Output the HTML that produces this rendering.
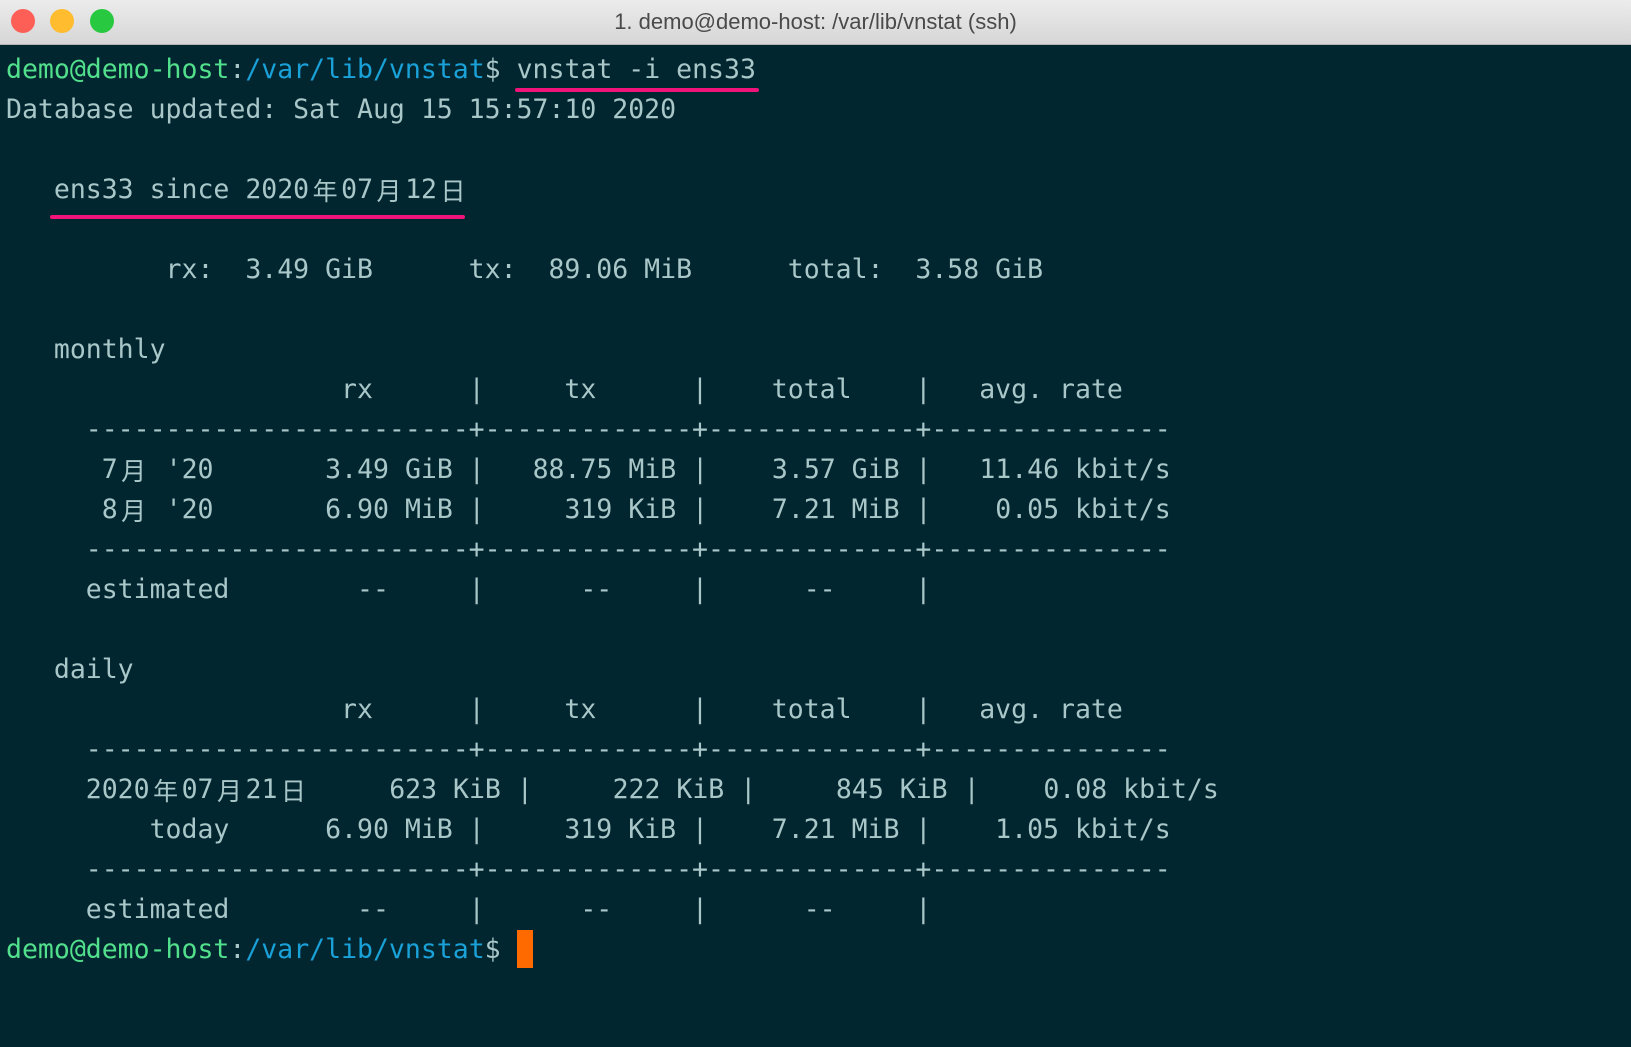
<!DOCTYPE html>
<html><head><meta charset="utf-8"><style>
html,body{margin:0;padding:0;width:1631px;height:1047px;overflow:hidden;background:#01262f}
.bar{position:absolute;left:0;top:0;width:1631px;height:44px;background:linear-gradient(#ececec,#d6d6d6);border-bottom:1px solid #b5b5b5}
.dot{position:absolute;top:9px;width:24px;height:24px;border-radius:50%}
.title{position:absolute;left:0;right:0;top:9px;text-align:center;font:22px "Liberation Sans",sans-serif;color:#4a4a4a}
pre{position:absolute;left:6px;top:50px;margin:0;font:26.5px/40px "DejaVu Sans Mono","Noto Sans CJK SC",monospace;color:#a9c7c8;white-space:pre}
.w{display:inline-block;width:32px;text-align:center;font-family:"Noto Sans CJK SC",sans-serif;font-size:25px;line-height:40px;vertical-align:top}
.g{color:#52e08c}.b{color:#1aa1d8}
.u{position:absolute;height:4px;background:#f0137a;border-radius:2px}
.cur{position:absolute;left:517px;top:930px;width:16px;height:38px;background:#ff6a00}
</style></head><body>
<div class="bar">
<div class="dot" style="left:11px;background:#fd5f57"></div>
<div class="dot" style="left:50px;background:#febc2e"></div>
<div class="dot" style="left:90px;background:#28c840"></div>
<div class="title">1. demo@demo-host: /var/lib/vnstat (ssh)</div>
</div>
<pre><span class="g">demo@demo-host</span>:<span class="b">/var/lib/vnstat</span>$ vnstat -i ens33
Database updated: Sat Aug 15 15:57:10 2020

   ens33 since 2020<span class="w">年</span>07<span class="w">月</span>12<span class="w">日</span>

          rx:  3.49 GiB      tx:  89.06 MiB      total:  3.58 GiB

   monthly
                     rx      |     tx      |    total    |   avg. rate
     ------------------------+-------------+-------------+---------------
      7<span class="w">月</span> '20       3.49 GiB |   88.75 MiB |    3.57 GiB |   11.46 kbit/s
      8<span class="w">月</span> '20       6.90 MiB |     319 KiB |    7.21 MiB |    0.05 kbit/s
     ------------------------+-------------+-------------+---------------
     estimated        --     |      --     |      --     |

   daily
                     rx      |     tx      |    total    |   avg. rate
     ------------------------+-------------+-------------+---------------
     2020<span class="w">年</span>07<span class="w">月</span>21<span class="w">日</span>     623 KiB |     222 KiB |     845 KiB |    0.08 kbit/s
         today      6.90 MiB |     319 KiB |    7.21 MiB |    1.05 kbit/s
     ------------------------+-------------+-------------+---------------
     estimated        --     |      --     |      --     |
<span class="g">demo@demo-host</span>:<span class="b">/var/lib/vnstat</span>$ </pre>
<div class="u" style="left:515px;width:244px;top:88px"></div>
<div class="u" style="left:50px;width:415px;top:215px"></div>
<div class="cur"></div>
</body></html>
